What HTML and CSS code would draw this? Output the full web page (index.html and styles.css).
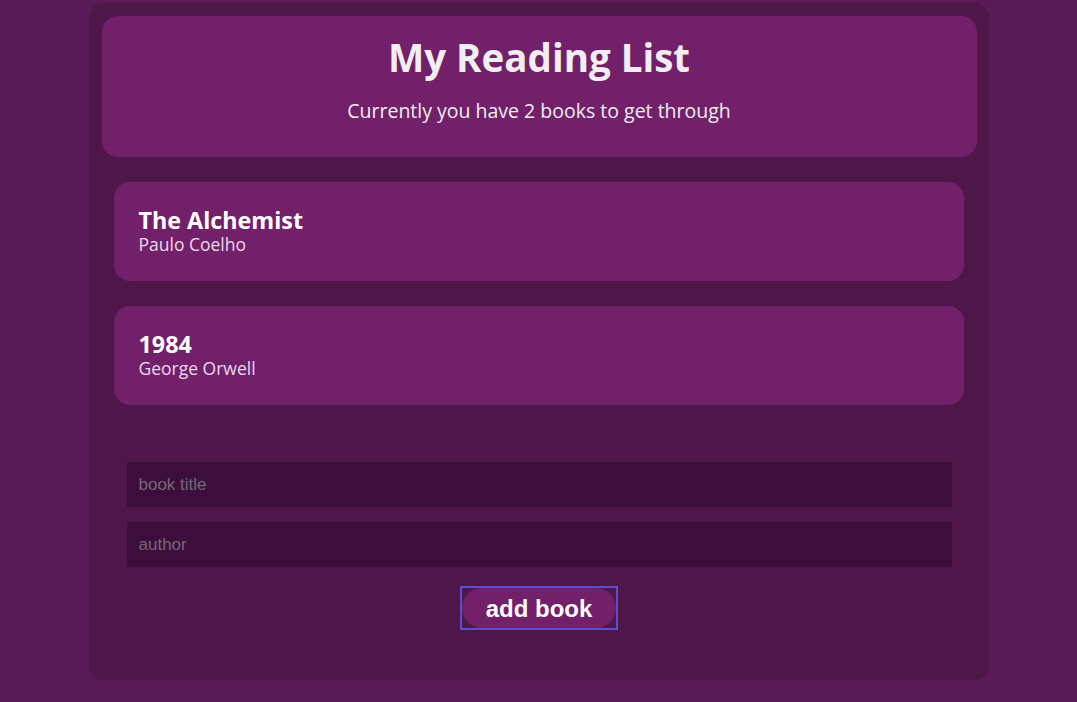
FILE: index.html
```html
<!DOCTYPE html>
<html>
<head>
<meta charset="utf-8">
<link rel="stylesheet" href="styles.css">
</head>
<body>
<div class="app">
  <header class="navbar">
    <h1>My Reading List</h1>
    <p>Currently you have 2 books to get through</p>
  </header>
  <div class="book-list">
    <div class="book">
      <div class="title">The Alchemist</div>
      <div class="author">Paulo Coelho</div>
    </div>
    <div class="book">
      <div class="title">1984</div>
      <div class="author">George Orwell</div>
    </div>
  </div>
  <form class="book-form">
    <input type="text" placeholder="book title">
    <input type="text" placeholder="author">
    <span class="focus-ring"><button type="button">add book</button></span>
  </form>
</div>
</body>
</html>
```

FILE: styles.css
```css
html, body {
  margin: 0;
  padding: 0;
  background: #5a1a55;
  height: 100%;
}
body {
  font-family: "Open Sans", "Noto Sans", sans-serif;
  color: #f0eef0;
}
.app {
  width: 875px;
  margin: 3px auto 0;
  padding: 13px 12px 13px 13px;
  background: #4f1649;
  border-radius: 14px;
  height: 651px;
}
.navbar {
  background: #73206b;
  border-radius: 16px;
  height: 141px;
  text-align: center;
  padding-top: 18px;
  box-sizing: border-box;
}
.navbar h1 {
  margin: 0;
  font-size: 38.5px;
  font-weight: 700;
  line-height: 46px;
}
.navbar p {
  margin: 18px 0 0;
  font-size: 19.5px;
  line-height: 26px;
}
.book-list {
  padding: 25px 13px 0 12px;
  display: flex;
  flex-direction: column;
  gap: 25px;
}
.book {
  background: #73206b;
  border-radius: 16px;
  height: 99px;
  box-sizing: border-box;
  padding: 25px 25px 0;
}
.book .title {
  font-weight: 700;
  font-size: 23.3px;
  line-height: 26px;
  color: #ffffff;
}
.book .author {
  font-size: 17.5px;
  line-height: 23px;
  color: #ead9ea;
}
.book-form {
  margin-top: 57px;
  padding: 0 25px;
  display: flex;
  flex-direction: column;
  align-items: center;
}
.book-form input {
  width: 100%;
  height: 45px;
  box-sizing: border-box;
  border: 0;
  outline: 0;
  background: #3d0e3c;
  padding: 0 12px;
  font-family: "Liberation Sans", Arial, sans-serif;
  font-size: 17px;
  color: #eee;
  margin-bottom: 15px;
}
.book-form input::placeholder {
  color: #76687a;
}
.focus-ring {
  display: block;
  border: 2px solid #5b4fd0;
  margin-top: 4px;
  line-height: 0;
}
.focus-ring button {
  width: 154px;
  height: 40px;
  border: 0;
  border-radius: 20px;
  background: #73206b;
  color: #ffffff;
  font-family: "Liberation Sans", Arial, sans-serif;
  font-weight: 700;
  font-size: 24px;
  padding: 1px 0 0;
}
```
